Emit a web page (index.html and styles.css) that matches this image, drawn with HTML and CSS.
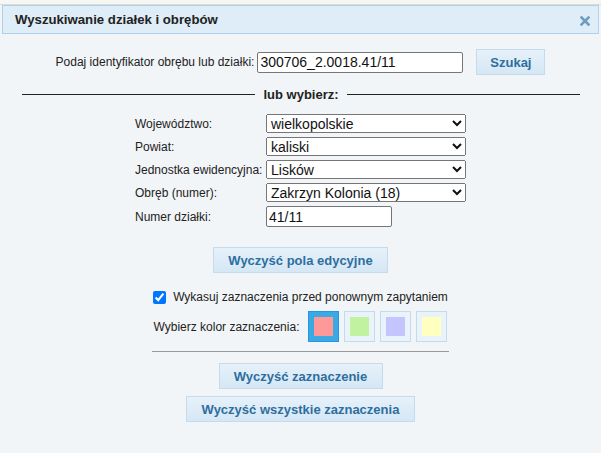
FILE: index.html
```html
<!DOCTYPE html>
<html lang="pl">
<head>
<meta charset="utf-8">
<title>Wyszukiwanie działek i obrębów</title>
<link rel="stylesheet" href="styles.css">
</head>
<body>
<div class="mapstrip"></div>
<div class="dialog">
  <div class="titlebar">
    <span class="title">Wyszukiwanie działek i obrębów</span>
    <span class="close" aria-label="zamknij">
      <svg width="10" height="10" viewBox="0 0 10 10"><path d="M1.5 1.5 L8.5 8.5 M8.5 1.5 L1.5 8.5" stroke="#6d9cc4" stroke-width="2.6" stroke-linecap="square"/></svg>
    </span>
  </div>
  <div class="content">
    <div class="idrow">
      <label class="lbl">Podaj identyfikator obrębu lub działki:</label>
      <input class="txt idinput" type="text" value="300706_2.0018.41/11">
      <button class="btn btn-search">Szukaj</button>
    </div>
    <div class="divider"><span>lub wybierz:</span></div>
    <div class="formgrid">
      <label class="lbl">Województwo:</label>
      <select class="sel"><option>wielkopolskie</option></select>
      <label class="lbl">Powiat:</label>
      <select class="sel"><option>kaliski</option></select>
      <label class="lbl">Jednostka ewidencyjna:</label>
      <select class="sel"><option>Lisków</option></select>
      <label class="lbl">Obręb (numer):</label>
      <select class="sel"><option>Zakrzyn Kolonia (18)</option></select>
      <label class="lbl">Numer działki:</label>
      <div><input class="txt numinput" type="text" value="41/11"></div>
    </div>
    <div class="center"><button class="btn btn-clearfields">Wyczyść pola edycyjne</button></div>
    <div class="checkrow">
      <input type="checkbox" checked id="wyk"><label class="lbl" for="wyk">Wykasuj zaznaczenia przed ponownym zapytaniem</label>
    </div>
    <div class="colorrow">
      <span class="lbl">Wybierz kolor zaznaczenia:</span>
      <span class="swatch active"><i class="c-red"></i></span>
      <span class="swatch"><i class="c-green"></i></span>
      <span class="swatch"><i class="c-violet"></i></span>
      <span class="swatch"><i class="c-yellow"></i></span>
    </div>
    <div class="hr"></div>
    <div class="center"><button class="btn btn-clear">Wyczyść zaznaczenie</button></div>
    <div class="center"><button class="btn btn-clearall">Wyczyść wszystkie zaznaczenia</button></div>
  </div>
</div>
</body>
</html>
```
FILE: styles.css
```css
html, body {
  margin: 0;
  padding: 0;
  width: 601px;
  height: 453px;
  overflow: hidden;
  background: #f2f5f7;
  font-family: "Liberation Sans", Arial, sans-serif;
  color: #222;
}
.mapstrip {
  height: 4px;
  background: #f6f6f2;
  border-bottom: 1px solid #dcdcd6;
}
.dialog {
  background: #f2f5f7;
}
.titlebar {
  margin: 0 2px;
  height: 27px;
  background: #deedf7;
  border: 1px solid #aed0ea;
  display: flex;
  align-items: center;
  justify-content: space-between;
  padding: 0 8px 0 12px;
}
.title {
  font-weight: bold;
  font-size: 13.2px;
  color: #222;
}
.close {
  display: flex;
  width: 10px;
  height: 10px;
  margin-top: 2px;
}
.content {
  display: flex;
  flex-direction: column;
  align-items: center;
  padding-top: 15px;
}
.lbl {
  font-size: 12px;
  color: #222;
}
.idrow {
  display: flex;
  align-items: center;
  height: 26px;
}
.idrow .lbl { margin-right: 3px; }
.txt {
  box-sizing: border-box;
  height: 21px;
  border: 1px solid #767676;
  border-radius: 2px;
  background: #fff;
  font-family: "Liberation Sans", Arial, sans-serif;
  font-size: 14px;
  color: #111;
  padding: 0 2px;
  margin: 0;
}
.idinput { width: 206px; }
.numinput { width: 126px; }
.btn {
  box-sizing: border-box;
  height: 26px;
  border: 1px solid #c5dbec;
  background: linear-gradient(#e6f1fa, #d5e7f5);
  color: #2e6e9e;
  font-family: "Liberation Sans", Arial, sans-serif;
  font-weight: bold;
  font-size: 13px;
  padding: 0;
  margin: 0;
}
.btn-search { width: 69px; margin-left: 13px; }
.divider {
  align-self: stretch;
  display: flex;
  align-items: center;
  margin: 8px 21px 0 22px;
  height: 22px;
}
.divider::before, .divider::after {
  content: "";
  flex: 1;
  border-top: 1px solid #222;
}
.divider span {
  font-weight: bold;
  font-size: 13px;
  padding: 0 8px;
}
.formgrid {
  display: grid;
  grid-template-columns: 131px 200px;
  row-gap: 4px;
  align-items: center;
  margin-top: 9px;
}
.sel {
  box-sizing: border-box;
  width: 200px;
  height: 19px;
  font-family: "Liberation Sans", Arial, sans-serif;
  font-size: 14px;
  color: #111;
  margin: 0;
}
.center { display: flex; justify-content: center; }
.btn-clearfields { width: 175px; margin-top: 20px; }
.checkrow {
  display: flex;
  align-items: center;
  margin-top: 16px;
  height: 16px;
}
.checkrow input { margin: 0 7px 0 0; width: 13px; height: 13px; }
.colorrow {
  display: flex;
  align-items: center;
  gap: 5px;
  margin-top: 6px;
}
.colorrow .lbl { margin-right: 4px; }
.swatch {
  box-sizing: border-box;
  width: 31px;
  height: 31px;
  border: 1px solid #c5dbec;
  background: #eaf3fa;
  display: flex;
  align-items: center;
  justify-content: center;
}
.swatch.active {
  background: #3baae3;
  border-color: #2694e8;
}
.swatch i { display: block; width: 19px; height: 19px; }
.c-red { background: #ff9999; }
.c-green { background: #c0f2a0; }
.c-violet { background: #c4c4ff; }
.c-yellow { background: #ffffc0; }
.hr {
  width: 297px;
  border-top: 1px solid #999;
  margin-top: 9px;
}
.btn-clear { width: 164px; margin-top: 11px; }
.btn-clearall { width: 229px; margin-top: 7px; }
```
